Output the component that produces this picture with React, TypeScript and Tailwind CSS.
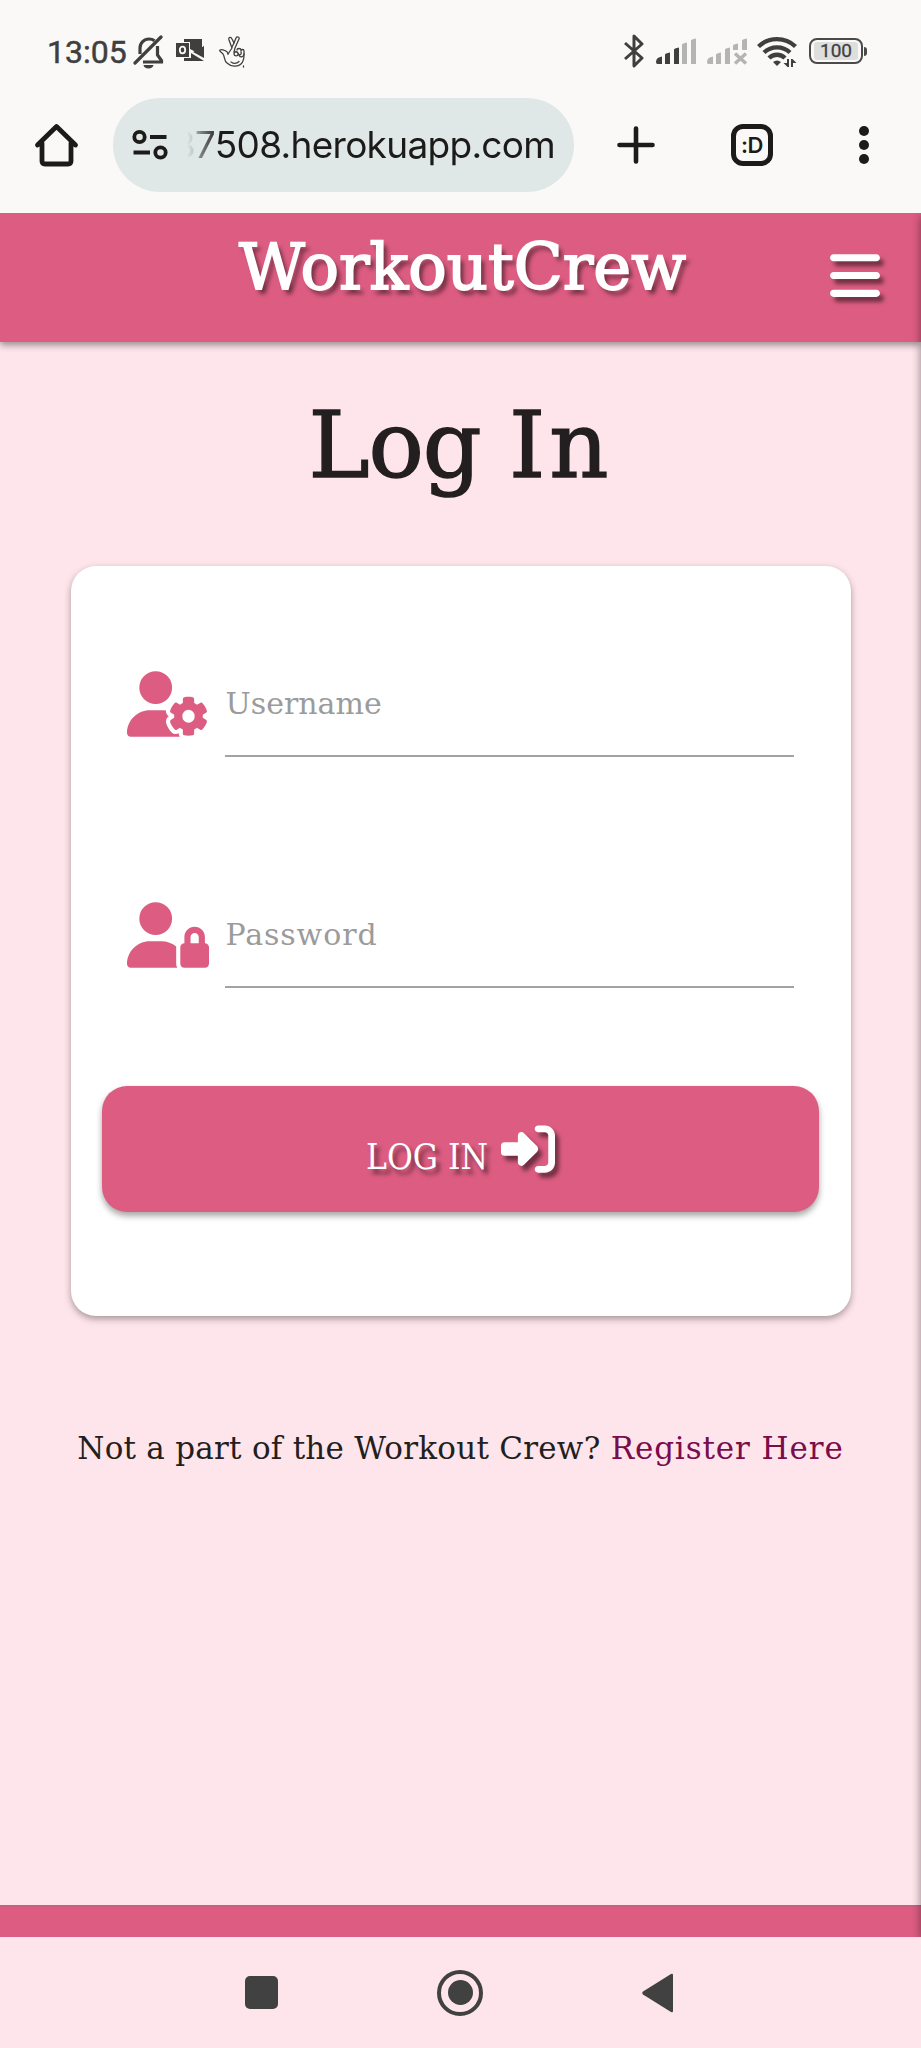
import React from "react";
import { FaBars, FaRightToBracket, FaUserGear, FaUserLock } from "react-icons/fa6";

function StatusBar() {
  return (
    <div className="flex h-[98px] items-start pl-[47px] pr-[54px] pt-[34px] text-[#3f3f3f]">
      <span className="w-[86px] whitespace-nowrap font-['Roboto'] text-[32px] leading-[37px] tracking-[0px] [-webkit-text-stroke:0.5px_#3f3f3f]">13:05</span>
      <svg className="mt-[1px] shrink-0" width="32" height="34" viewBox="0 0 32 34" fill="none" stroke="currentColor" strokeWidth="3.200">
        <path d="M2 28 28 2" strokeLinecap="round" />
        <path d="M7 19v-6c0-5 4-9 9-9 2 0 4 .6 5.500 1.800" />
        <path d="M24.500 11v9l4 5.500v1.500H10" />
        <path d="M10.500 30h10a5 3.500 0 0 1-10 0Z" fill="currentColor" stroke="none" />
      </svg>
      <svg className="ml-[10px] mt-[4px] shrink-0" width="30" height="26" viewBox="0 0 30 26">
        <path d="M9 1h18v10l-6 3-6-3V4H9Z" fill="currentColor" />
        <path d="m18 14 11-6v12Z" fill="currentColor" />
        <path d="M9 20h7v-5l13 8H9Z" fill="currentColor" />
        <rect x="1" y="5" width="13" height="14" fill="currentColor" />
        <ellipse cx="7.500" cy="12" rx="2.700" ry="3.300" fill="none" stroke="#fbf9f8" strokeWidth="1.800" />
      </svg>
      <svg className="ml-[14px] mt-[1px] shrink-0" width="28" height="34" viewBox="0 0 28 34" fill="none" stroke="currentColor" strokeWidth="1.300" strokeLinejoin="round" strokeLinecap="round">
        <path d="M9 19 13 13 10 5c-1-3 2-3.500 3-1l2 4 2-5c1-2 4-1 3 1l-4 9-1 4" />
        <path d="M9 19c0-3-6-5-8-4-1 1 1 2 3 4 2 3 1 7 4 9 4 4 11 4 14 1 2-2 3-5 3-9v-4c0-2-3-2-3 0v-1c0-2-4-2-4 0" />
        <path d="M15 19c0-3 4-3 4 0s-4 2-4 0M19 18c1 3 4 2 3-1M20 20c1 3 5 2 5-1M12 27c3 2 6 1.500 8-.5M13 12l2-4M24.500 31v1" />
      </svg>
      <svg className="ml-auto shrink-0" width="24" height="34" viewBox="0 0 24 34" fill="none" stroke="currentColor" strokeWidth="3" strokeLinejoin="round">
        <path d="m3 9 17 15-8 8V2l8 8L3 25" />
      </svg>
      <svg className="ml-[9px] mt-[4px] shrink-0" width="42" height="28" viewBox="0 0 42 28">
        <path d="M1 24c0-3 2-5 6-5.500V26H2.500Q1 26 1 24Z" fill="#3f3f3f" />
        <path d="M10 16.500q0-1 5-2V26h-5ZM19 11.500q0-1 5-2V26h-5Z" fill="#3f3f3f" />
        <path d="M27 6.500q0-1 5-2V26h-5ZM36 2.500q0-1 5-2V26h-5Z" fill="#b4b4b3" />
      </svg>
      <svg className="ml-[9px] mt-[4px] shrink-0" width="42" height="28" viewBox="0 0 42 28">
        <path d="M1 24c0-3 2-5 6-5.500V26H2.500Q1 26 1 24ZM10 16.500q0-1 5-2V26h-5ZM19 11.500q0-1 5-2V26h-5ZM27 7.500q0-1 5-2V12h-5ZM36 2.500q0-1 5-2V12h-5Z" fill="#b4b4b3" />
        <path d="m29 15.500 11 10m0-10-11 10" stroke="#b4b4b3" strokeWidth="3.400" />
      </svg>
      <svg className="ml-[9px] mt-[2px] shrink-0" width="41" height="32" viewBox="0 0 41 32">
        <g fill="none" stroke="#3f3f3f" strokeWidth="4.400">
          <path d="M1.500 10.500a27 27 0 0 1 37 0" />
          <path d="M7 16.500a19 19 0 0 1 26 0" />
          <path d="M12 22a11.500 11.500 0 0 1 16 0" />
        </g>
        <path d="m16 26q4-3 8 0l-4 4Z" fill="#3f3f3f" />
        <path d="M32 23v8h-1.500l-4-4h3.500v-4ZM34 31v-8h1.500l4 4H36v4Z" fill="#3f3f3f" />
      </svg>
      <div className="ml-[11px] mt-[4px] flex items-center">
        <div className="flex h-[26px] w-[54px] items-center justify-center rounded-[8px] border-[2.500px] border-[#4a4a4a] p-[3px]">
          <div className="flex h-[18px] w-full items-center justify-center rounded-[3px] bg-[#dededd] font-['Roboto'] text-[19px] leading-[18px] [-webkit-text-stroke:0.3px_#3f3f3f]">100</div>
        </div>
        <div className="ml-[1px] h-[9px] w-[3px] rounded-r-sm bg-[#4a4a4a]" />
      </div>
    </div>
  );
}

function BrowserBar() {
  return (
    <div className="flex h-[94px] items-center text-[#1c1b1a]">
      <svg className="ml-[34px] shrink-0" width="45" height="44" viewBox="0 0 45 44" fill="none" stroke="currentColor" strokeWidth="4.800" strokeLinecap="round" strokeLinejoin="round">
        <path d="M3.500 22 22.500 3.500l19 18.500M8 20v18q0 3 3 3h23q3 0 3-3V20" />
      </svg>
      <div className="ml-[34px] flex h-[94px] w-[461px] items-center rounded-full bg-[#dfe8e6] pl-[19px]">
        <svg className="shrink-0" width="37" height="32" viewBox="0 0 37 32" fill="none" stroke="currentColor" strokeWidth="3.800">
          <circle cx="7.500" cy="8" r="5.200" />
          <circle cx="28.500" cy="23.500" r="5.200" />
          <path d="M18 8h16.500M1.500 23.500H18" />
        </svg>
        <div className="flex w-[386px] justify-end whitespace-nowrap font-['Inter'] text-[37px] leading-[50px] tracking-[-0.700px] [mask-image:linear-gradient(to_right,transparent_18px,rgba(0,0,0,0.15)_24px,rgba(0,0,0,0.5)_32px,black_50px)]">
          <span>37508.herokuapp.com</span>
        </div>
      </div>
      <svg className="ml-[42px] shrink-0" width="40" height="40" viewBox="0 0 40 40" stroke="currentColor" strokeWidth="4.600" strokeLinecap="round">
        <path d="M20 3.500v33M3.500 20h33" />
      </svg>
      <div className="ml-[75px] flex h-[42px] w-[42px] items-center justify-center rounded-[12px] border-[5px] border-current font-['Inter'] text-[22px] font-semibold leading-none tracking-[-0.500px]">:D</div>
      <div className="ml-[86px] flex flex-col gap-[4px]">
        <i className="size-[10px] rounded-full bg-current" />
        <i className="size-[10px] rounded-full bg-current" />
        <i className="size-[10px] rounded-full bg-current" />
      </div>
    </div>
  );
}

function Field({ icon, label, type }: { icon: React.ReactNode; label: string; type: string }) {
  return (
    <div className="flex h-[106px] items-start pl-[56px] pr-[57px] text-[#dd5d82]">
      <div className="mt-[21px] h-[66px] w-[82px] shrink-0">{icon}</div>
      <input
        type={type}
        placeholder={label}
        aria-label={label}
        className="ml-[16px] h-[107px] min-w-0 flex-1 border-b-2 border-[#a3a3a3] bg-transparent pl-[1px] pt-[2px] text-[30px] outline-none placeholder:text-[#9b9b9b] [&[type=password]]:tracking-[0.900px]"
      />
    </div>
  );
}

export default function App() {
  return (
    <div className="flex h-[2048px] w-[921px] flex-col overflow-hidden bg-[#fee5ec] font-['DejaVu_Serif',serif] text-[#231f20]">
      <div className="h-[213px] shrink-0 bg-[#fbf9f8]">
        <StatusBar />
        <BrowserBar />
      </div>
      <div className="relative flex h-[1724px] shrink-0 flex-col overflow-hidden">
        <header className="flex h-[129px] shrink-0 items-start justify-end bg-[#dd5d82] pr-[41px] text-white shadow-[0_3px_7px_rgba(0,0,0,0.4)]">
          <h1 className="mr-[144px] mt-[14px] whitespace-nowrap text-[64px] leading-[80px] [-webkit-text-stroke:1.800px_white] [text-shadow:4px_5px_4px_rgba(0,0,0,0.5)]">WorkoutCrew</h1>
          <FaBars className="mt-[34px] h-[57px] w-[50px] drop-shadow-[4px_5px_2px_rgba(0,0,0,0.5)]" />
        </header>
        <main className="flex flex-col items-center">
          <h2 className="mt-[49px] h-[175px] whitespace-nowrap text-[92px] leading-[110px] [-webkit-text-stroke:1.500px_#231f20]">
            <span className="tracking-[-1px]">Log </span>
            <span className="tracking-[4px]">In</span>
          </h2>
          <form className="flex h-[750px] w-[780px] flex-col rounded-[25px] bg-white pt-[84px] shadow-[0_3px_7px_rgba(0,0,0,0.35)]">
            <Field icon={<FaUserGear className="h-[66px] w-[82px]" />} label="Username" type="text" />
            <div className="h-[125px]" />
            <Field icon={<FaUserLock className="h-[66px] w-[82px]" />} label="Password" type="password" />
            <button type="button" className="mx-auto mt-[99px] flex h-[126px] w-[717px] items-start justify-center rounded-[25px] bg-[#dd5d82] text-white shadow-[0_4px_6px_rgba(0,0,0,0.35)]">
              <span className="mt-[51px] whitespace-nowrap font-['DejaVu_Serif_Condensed','DejaVu_Serif',serif] text-[35px] leading-[40px] [font-stretch:semi-condensed] [text-shadow:4px_5px_4px_rgba(0,0,0,0.5)]">LOG IN</span>
              <FaRightToBracket className="ml-[13px] mt-[36px] size-[54px] drop-shadow-[4px_5px_2px_rgba(0,0,0,0.5)]" />
            </button>
          </form>
          <p className="mt-[112px] whitespace-nowrap text-[31px] leading-[40px] tracking-[0.250px]">
            Not a part of the Workout Crew? <a className="tracking-[0.900px] text-[#7b0c4c]">Register Here</a>
          </p>
        </main>
        <footer className="mt-auto h-[32px] shrink-0 border-t-2 border-[#cc5f7f] bg-[#dd5d82]" />
        <aside className="absolute -right-[10px] top-0 h-full w-[10px] shadow-[0_3px_10px_rgba(0,0,0,0.45)]" />
      </div>
      <nav className="flex h-[111px] items-center pl-[245px] text-[#414141]">
        <div className="size-[33px] rounded-[5px] bg-current" />
        <div className="ml-[159px] flex size-[46px] items-center justify-center rounded-full border-[4px] border-current">
          <div className="size-[25px] rounded-full bg-current" />
        </div>
        <svg className="ml-[159px]" width="32" height="40" viewBox="0 0 32 40">
          <path d="M1 18.500 29 1q2-1 2 1v36q0 2-2 1L1 21.500q-1.500-1.500 0-3Z" fill="currentColor" />
        </svg>
      </nav>
    </div>
  );
}
